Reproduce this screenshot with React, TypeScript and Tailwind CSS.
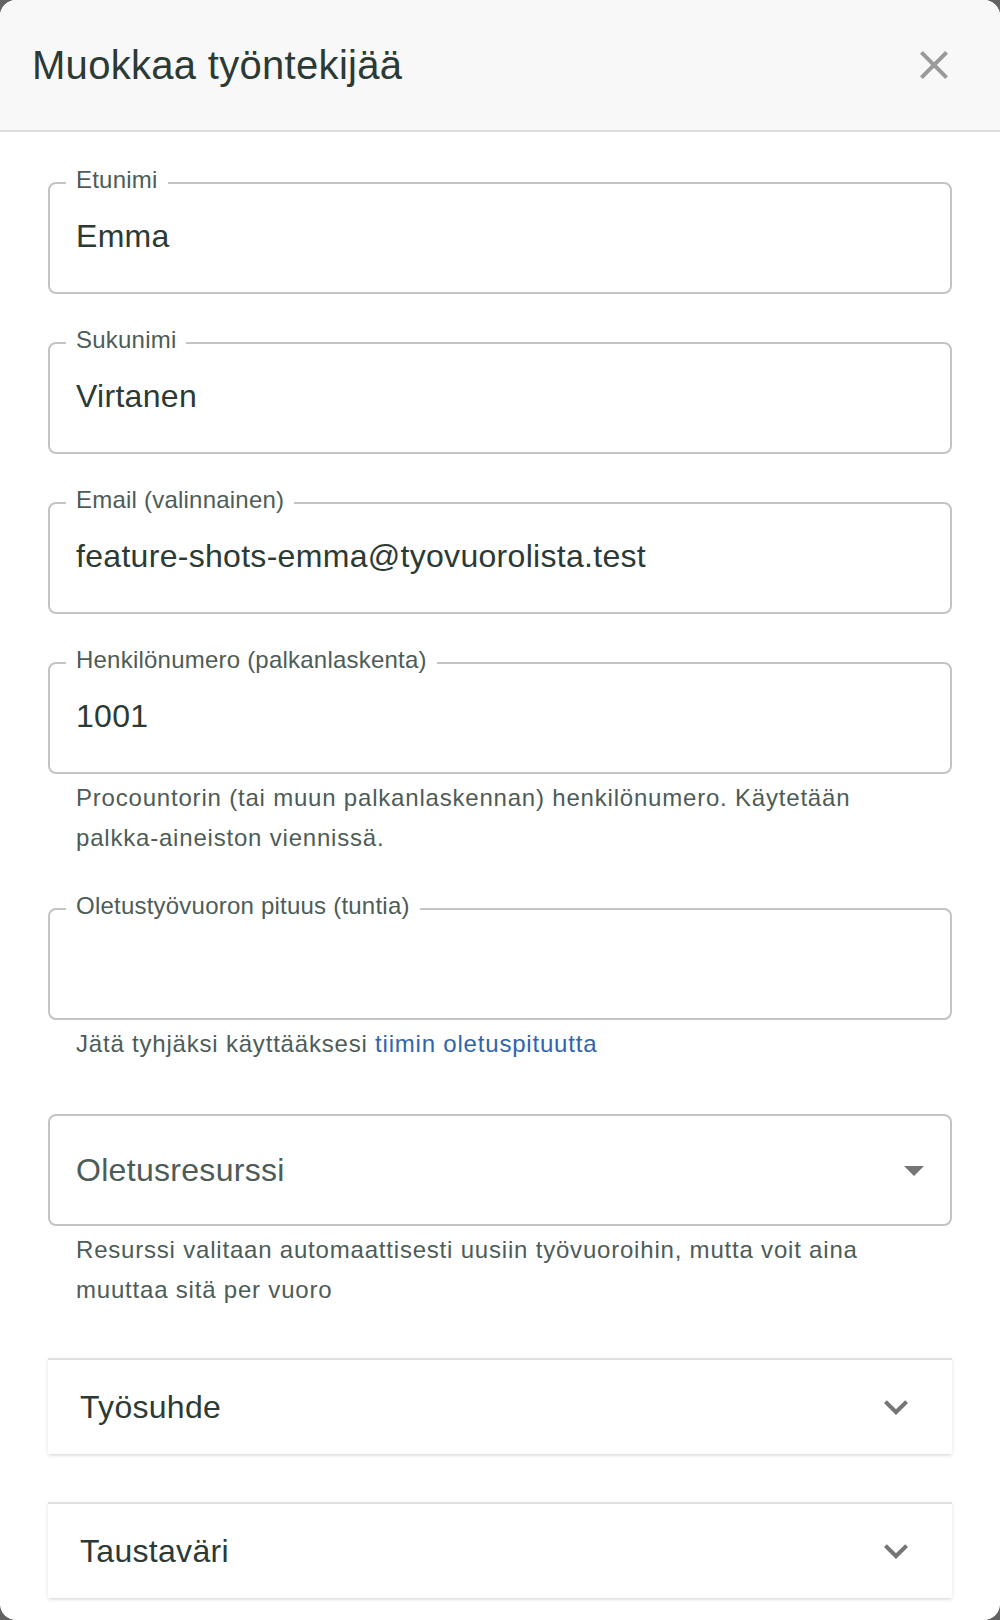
import React from "react";

function Field({ label, value, helper, extraTop }: { label: string; value?: string; helper?: React.ReactNode; extraTop?: boolean }) {
  return (
    <div className={extraTop ? "mt-[2px] flex flex-col" : "flex flex-col"}>
      <div className="relative flex h-[112px] items-center rounded-lg border-2 border-[#c4c4c4] px-[26px] pb-[4px]">
        <span className="absolute left-[16px] top-[-21px] bg-white px-[10px] text-[24px] leading-[34px] tracking-[0.22px] text-[#4d5c57]">
          {label}
        </span>
        <span className="text-[32px] leading-[46px] tracking-[0.3px] text-[#2c3a35]">{value}</span>
      </div>
      {helper && (
        <div className="mt-[4px] px-[28px] text-[24px] leading-[40px] tracking-[0.8px] text-[#4d5c57]">{helper}</div>
      )}
    </div>
  );
}

function Accordion({ title }: { title: string }) {
  return (
    <div className="flex h-[96px] items-center justify-between border-t-2 border-[#e0e0e0] bg-white pl-[32px] pr-[32px] shadow-[0_2px_3px_-1px_rgba(0,0,0,0.12),0_1px_5px_0_rgba(0,0,0,0.08)]">
      <span className="text-[32px] leading-[46px] tracking-[0.3px] text-[#2c3a35]">{title}</span>
      <svg width="48" height="48" viewBox="0 0 24 24">
        <path d="M16.59 8.59 12 13.17 7.41 8.59 6 10l6 6 6-6z" fill="#757575" />
      </svg>
    </div>
  );
}

export default function App() {
  return (
    <div className="bg-[#626262] font-['Liberation_Sans',Arial,sans-serif]">
      <div className="flex h-[1620px] flex-col overflow-hidden rounded-2xl bg-white">
        <div className="flex h-[132px] shrink-0 items-center justify-between border-b-2 border-[#dcdcdc] bg-[#f8f8f8] pl-[32px] pr-[42px]">
          <h2 className="text-[40px] leading-[56px] tracking-[0.3px] text-[#2c3a35]">Muokkaa työntekijää</h2>
          <svg width="48" height="48" viewBox="0 0 24 24">
            <path
              d="M19 6.41 17.59 5 12 10.59 6.41 5 5 6.41 10.59 12 5 17.59 6.41 19 12 13.41 17.59 19 19 17.59 13.41 12z"
              fill="#9a9a9a"
            />
          </svg>
        </div>
        <div className="flex flex-col gap-12 px-12 pt-[50px]">
          <Field label="Etunimi" value="Emma" />
          <Field label="Sukunimi" value="Virtanen" />
          <Field label="Email (valinnainen)" value="feature-shots-emma@tyovuorolista.test" />
          <Field
            label="Henkilönumero (palkanlaskenta)"
            value="1001"
            helper="Procountorin (tai muun palkanlaskennan) henkilönumero. Käytetään palkka-aineiston viennissä."
          />
          <Field
            label="Oletustyövuoron pituus (tuntia)"
            value=""
            extraTop
            helper={
              <>
                Jätä tyhjäksi käyttääksesi <span className="text-[#2f64b0]">tiimin oletuspituutta</span>
              </>
            }
          />
          <div className="mt-[2px] flex flex-col">
            <div className="flex h-[112px] items-center justify-between rounded-lg border-2 border-[#c4c4c4] pl-[26px] pr-[12px]">
              <span className="text-[32px] leading-[46px] tracking-[0.3px] text-[#4d5c57]">Oletusresurssi</span>
              <svg width="48" height="48" viewBox="0 0 24 24">
                <path d="M7 10l5 5 5-5z" fill="#757575" />
              </svg>
            </div>
            <div className="mt-[4px] px-[28px] text-[24px] leading-[40px] tracking-[0.8px] text-[#4d5c57]">
              Resurssi valitaan automaattisesti uusiin työvuoroihin, mutta voit aina muuttaa sitä per vuoro
            </div>
          </div>
          <Accordion title="Työsuhde" />
          <Accordion title="Taustaväri" />
        </div>
      </div>
    </div>
  );
}
